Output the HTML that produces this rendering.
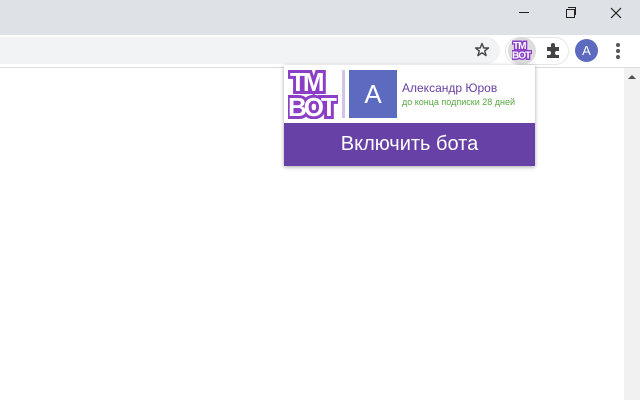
<!DOCTYPE html><html><head><style>
body{margin:0;width:640px;height:400px;background:#fff;position:relative;overflow:hidden;font-family:"Liberation Sans",sans-serif}
.a{position:absolute}
</style></head><body>
<div class="a" style="left:0;top:0;width:640px;height:35px;background:#dee1e6"></div>
<div class="a" style="left:519px;top:12px;width:10px;height:1px;background:#222"></div>
<div class="a" style="left:566px;top:9px;width:7px;height:7px;border:1px solid #222"></div>
<div class="a" style="left:568px;top:7px;width:7px;height:7px;border-top:1px solid #222;border-right:1px solid #222"></div>
<svg class="a" style="left:610px;top:7px" width="12" height="12"><path d="M1 1L11 11M11 1L1 11" stroke="#222" stroke-width="1.2"/></svg>
<div class="a" style="left:0;top:35px;width:640px;height:32px;background:#fff;border-bottom:1px solid #dadce0"></div>
<div class="a" style="left:-20px;top:37px;width:520px;height:27px;background:#f1f3f4;border-radius:14px"></div>
<svg class="a" style="left:474px;top:42px" width="16" height="16"><path d="M8 1.5L9.8 6H14.5L10.7 8.9L12.1 13.6L8 10.8L3.9 13.6L5.3 8.9L1.5 6H6.2Z" fill="none" stroke="#444" stroke-width="1.4" stroke-linejoin="round"/></svg>
<div class="a" style="left:505px;top:37px;width:64px;height:28px;border-radius:14px;background:#fff;border:1px solid #e6e6e6;box-sizing:border-box"></div>
<div class="a" style="left:508px;top:37px;width:28px;height:28px;border-radius:50%;background:#dcdcdc"></div>
<svg class="a" style="left:512px;top:40px" width="20" height="20"><g font-family="Liberation Sans" font-weight="bold" font-size="10" fill="#fff" stroke="#8b3fc6" stroke-width="3" paint-order="stroke" letter-spacing="-1"><text x="1" y="9">TM</text><text x="0" y="18.5">BOT</text></g></svg>
<svg class="a" style="left:544px;top:41px" width="18" height="18"><path d="M3 6h4V4a2 2 0 014 0v2h4v4h-2a2 2 0 000 4h2v3H3v-3h2a2 2 0 000-4H3z" fill="#444"/></svg>
<div class="a" style="left:575px;top:39px;width:23px;height:23px;border-radius:50%;background:#5c6bc0;color:#fff;font-size:13px;line-height:23px;text-align:center">A</div>
<div class="a" style="left:616px;top:43px;width:4px;height:4px;border-radius:2px;background:#555"></div>
<div class="a" style="left:616px;top:49px;width:4px;height:4px;border-radius:2px;background:#555"></div>
<div class="a" style="left:616px;top:55px;width:4px;height:4px;border-radius:2px;background:#555"></div>
<div class="a" style="left:624px;top:68px;width:16px;height:332px;background:#f1f1f1"></div>
<svg class="a" style="left:627px;top:73px" width="10" height="8"><path d="M1 6L5 2L9 6Z" fill="#505050"/></svg>
<div class="a" style="left:284px;top:65px;width:251px;height:101px;background:#fff;box-shadow:0 1px 4px rgba(0,0,0,.35)"></div>
<svg class="a" style="left:288px;top:69px" width="50" height="50"><g font-family="Liberation Sans" font-weight="bold" font-size="26" fill="#fff" stroke="#8b3fc6" stroke-width="6" paint-order="stroke" letter-spacing="-3"><text x="2" y="22">TM</text><text x="0" y="47">BOT</text></g></svg>
<div class="a" style="left:342px;top:70px;width:3px;height:48px;background:#d2c4e6"></div>
<div class="a" style="left:349px;top:70px;width:48px;height:48px;background:#5c6bc0;color:#fff;font-size:26px;line-height:48px;text-align:center">A</div>
<div class="a" style="left:402px;top:81px;font-size:12px;color:#6a3ea1">Александр Юров</div>
<div class="a" style="left:402px;top:97px;font-size:9px;color:#5aa844">до конца подписки 28 дней</div>
<div class="a" style="left:284px;top:123px;width:251px;height:43px;background:#6741a6;color:#fff;font-size:20px;line-height:42px;text-align:center">Включить бота</div>
</body></html>
